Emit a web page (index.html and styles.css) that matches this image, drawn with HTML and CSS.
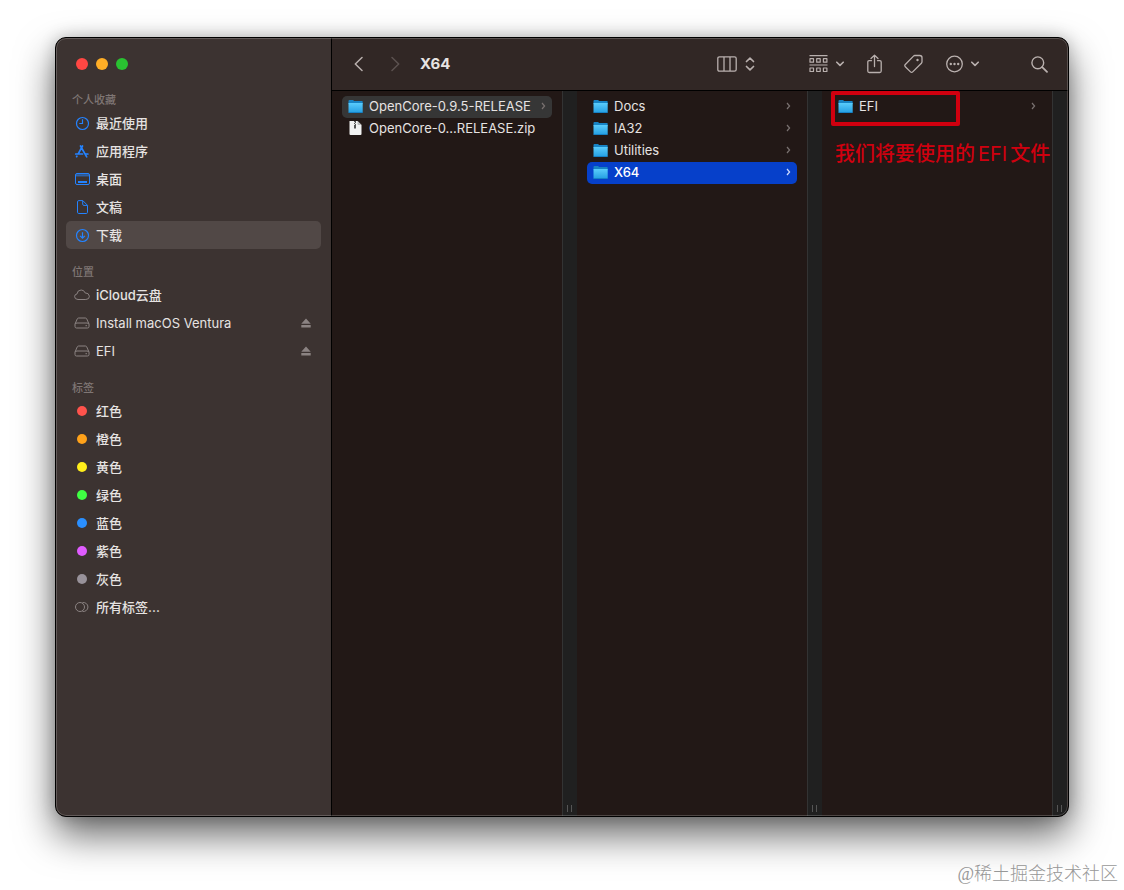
FILE: index.html
```html
<!DOCTYPE html>
<html lang="zh-CN">
<head>
<meta charset="utf-8">
<title>X64</title>
<link rel="stylesheet" href="styles.css">
</head>
<body>
<svg class="defs" aria-hidden="true">
  <defs>
    <linearGradient id="folder-front" x1="0" y1="0" x2="0" y2="1">
      <stop offset="0" stop-color="#5accfb"/>
      <stop offset="1" stop-color="#239ee2"/>
    </linearGradient>
    <symbol id="folder" viewBox="0 0 15 14">
      <path d="M.5 2Q.5 1 1.500 1H5l1.200 1H14q.7 0 .7.800V5H.5z" fill="#1783c4"/>
      <path d="M.5 4h14.200v9q0 .9-.9.9H1.400q-.9 0-.9-.9z" fill="url(#folder-front)"/>
      <path d="M.5 13h14.200v.7H.5z" fill="#1279bd"/>
    </symbol>
    <symbol id="drive" viewBox="0 0 16 14">
      <path d="M1 8 3.300 2.800Q3.700 2 4.600 2h6.800q.9 0 1.300.8L15 8v2.500q0 1.500-1.500 1.500h-11Q1 12 1 10.500zM1.200 8Q1.600 7 3 7h10q1.400 0 1.800 1M11.500 9.700h1.500" fill="none" stroke="currentColor"/>
    </symbol>
    <symbol id="eject" viewBox="0 0 10 10">
      <path d="M5 .5 9.700 5.700H.3zM.3 7h9.400v2.500H.3z" fill="currentColor"/>
    </symbol>
    <symbol id="next" viewBox="0 0 5 8">
      <path d="m1 1 2.600 3L1 7" fill="none" stroke="currentColor" stroke-width="1.200"/>
    </symbol>
    <symbol id="down" viewBox="0 0 8 6">
      <path d="m.8 1.200 3.200 3.200 3.200-3.200" fill="none" stroke="currentColor" stroke-width="1.600" stroke-linecap="round" stroke-linejoin="round"/>
    </symbol>
  </defs>
</svg>

<main class="window">
  <nav class="sidebar">
    <div class="lights">
      <button class="light close" aria-label="关闭"></button>
      <button class="light minimize" aria-label="最小化"></button>
      <button class="light maximize" aria-label="缩放"></button>
    </div>

    <section class="group favorites">
      <h2>个人收藏</h2>
      <a class="item" href="#recents"><svg viewBox="0 0 16 16"><g fill="none" stroke="currentColor" stroke-width="1.200"><circle cx="8.500" cy="8.500" r="6"/><path d="M8.500 4.300V8.500H5.300"/></g></svg>最近使用</a>
      <a class="item" href="#apps"><svg viewBox="0 0 16 16"><g fill="none" stroke="currentColor" stroke-width="1.700" stroke-linecap="round"><path d="M8.500 3 4.200 10.800M6.500 3l6.200 10.800M1.700 11h6.800M11.700 11h2.200M2.900 13.200l-.3.500"/></g></svg>应用程序</a>
      <a class="item" href="#desktop"><svg viewBox="0 0 16 16"><rect x="1.500" y="2.500" width="14" height="11" rx="1.500" fill="none" stroke="currentColor"/><path d="M2 3h13v2H2z" fill="currentColor" opacity=".45"/><path d="M2 4.700h13v.6H2zM4 10h9v2H4z" fill="currentColor"/></svg>桌面</a>
      <a class="item" href="#documents"><svg viewBox="0 0 16 16"><path d="M4.800 1.600h4l4.700 4.700v7q0 1.200-1.200 1.200H4.800q-1.300 0-1.300-1.300V2.900q0-1.300 1.300-1.300zM8.700 1.800v3.400q0 1.200 1.200 1.200h3.400" fill="none" stroke="currentColor"/></svg>文稿</a>
      <a class="item current" href="#downloads" aria-current="page"><svg viewBox="0 0 16 16"><g fill="none" stroke="currentColor" stroke-width="1.200"><circle cx="8.500" cy="8.500" r="6"/><path d="M8.500 5.200v6M6.100 8.800l2.400 2.400 2.400-2.400"/></g></svg>下载</a>
    </section>

    <section class="group places">
      <h2>位置</h2>
      <a class="item" href="#icloud"><svg viewBox="0 0 16 14"><path d="M4 11.500Q.6 11.300.6 8.600.6 6.300 3 5.900 3.500 2 7.200 2q2.900 0 3.900 2.900 3.900 0 4.300 3.300.1 3.200-3.600 3.300z" fill="none" stroke="currentColor"/></svg>iCloud云盘</a>
      <a class="item" href="#install"><svg><use href="#drive"/></svg><span class="name">Install macOS Ventura</span><svg class="eject"><use href="#eject"/></svg></a>
      <a class="item" href="#efi"><svg><use href="#drive"/></svg><span class="name">EFI</span><svg class="eject"><use href="#eject"/></svg></a>
    </section>

    <section class="group tags">
      <h2>标签</h2>
      <a class="item" href="#red"><i class="dot red"></i>红色</a>
      <a class="item" href="#orange"><i class="dot orange"></i>橙色</a>
      <a class="item" href="#yellow"><i class="dot yellow"></i>黄色</a>
      <a class="item" href="#green"><i class="dot green"></i>绿色</a>
      <a class="item" href="#blue"><i class="dot blue"></i>蓝色</a>
      <a class="item" href="#purple"><i class="dot purple"></i>紫色</a>
      <a class="item" href="#gray"><i class="dot gray"></i>灰色</a>
      <a class="item" href="#all"><svg viewBox="0 0 16 16"><g fill="none" stroke="currentColor"><circle cx="6" cy="8" r="4.500"/><path d="M8.500 3.600a4.500 4.500 0 1 1 0 8.800"/></g></svg>所有标签...</a>
    </section>
  </nav>

  <div class="content">
    <header class="toolbar">
      <button class="tool back" aria-label="返回"><svg width="9" height="16" viewBox="0 0 9 16"><path d="M8 1.500 1.300 8 8 14.500" fill="none" stroke="currentColor" stroke-width="1.500" stroke-linecap="round" stroke-linejoin="round"/></svg></button>
      <button class="tool forward" aria-label="前进" disabled><svg width="9" height="16" viewBox="0 0 9 16"><path d="M1 1.500 7.700 8 1 14.500" fill="none" stroke="currentColor" stroke-width="1.500" stroke-linecap="round" stroke-linejoin="round"/></svg></button>
      <h1>X64</h1>
      <button class="tool view" aria-label="分栏显示">
        <svg width="20" height="16" viewBox="0 0 20 16"><path d="M2.500.8h15q1.700 0 1.700 1.700v11q0 1.700-1.700 1.700h-15Q.8 15.200.8 13.500v-11Q.8.8 2.500.8zM7 1v14M13 1v14" fill="none" stroke="currentColor" stroke-width="1.300"/></svg>
        <svg width="10" height="14" viewBox="0 0 10 14"><path d="M1.500 4.500 5 1.200l3.500 3.300M1.500 9.500 5 12.800l3.500-3.300" fill="none" stroke="currentColor" stroke-width="1.700" stroke-linecap="round" stroke-linejoin="round"/></svg>
      </button>
      <button class="tool arrange" aria-label="分组">
        <svg width="19" height="18" viewBox="0 0 19 18"><path d="M.5.7h18M.5 10h18M1 3.700h3.500v3.500H1zM7.700 3.700h3.500v3.500H7.700zM14.400 3.700h3.500v3.500h-3.500zM1 13h3.500v3.500H1zM7.700 13h3.500v3.500H7.700zM14.400 13h3.500v3.500h-3.500z" fill="none" stroke="currentColor" stroke-width="1.200" stroke-linejoin="round"/></svg>
        <svg width="8" height="6"><use href="#down"/></svg>
      </button>
      <button class="tool share" aria-label="共享"><svg width="15" height="20" viewBox="0 0 15 20"><path d="M4.500 6.700H2.200Q.8 6.700.8 8.100V17q0 1.500 1.500 1.500h10.400q1.500 0 1.500-1.500V8.100q0-1.400-1.400-1.400h-2.300M7.500 12.500V1.200M4 4.500l3.500-3.400L11 4.500" fill="none" stroke="currentColor" stroke-width="1.300" stroke-linecap="round" stroke-linejoin="round"/></svg></button>
      <button class="tool tag" aria-label="标签"><svg width="19" height="20" viewBox="0 0 19 20"><path d="M10.800 1.500h5q2.200 0 2.200 2.200v4.100q0 .9-.6 1.500l-8.700 8.600q-1.100 1.100-2.200 0L1.300 12.700q-1.100-1.100 0-2.200L9.500 2.100q.6-.6 1.300-.6z" fill="none" stroke="currentColor" stroke-width="1.300"/><circle cx="13.500" cy="6" r="1.200" fill="currentColor"/></svg></button>
      <button class="tool more" aria-label="操作">
        <svg width="17" height="18" viewBox="0 0 17 18"><circle cx="8.500" cy="9" r="7.800" fill="none" stroke="currentColor" stroke-width="1.300"/><g fill="currentColor"><circle cx="4.800" cy="9" r="1.200"/><circle cx="8.500" cy="9" r="1.200"/><circle cx="12.200" cy="9" r="1.200"/></g></svg>
        <svg width="8" height="6"><use href="#down"/></svg>
      </button>
      <button class="tool search" aria-label="搜索"><svg width="17" height="17" viewBox="0 0 17 17"><path d="m11.200 11.200 4.800 4.600" stroke="currentColor" stroke-width="1.800" stroke-linecap="round"/><circle cx="6.800" cy="6.800" r="5.900" fill="none" stroke="currentColor" stroke-width="1.400"/></svg></button>
    </header>

    <div class="columns">
      <section class="column">
        <div class="files">
          <a class="file open" href="#opencore"><svg class="icon"><use href="#folder"/></svg><span class="name">OpenCore-0.9.5-RELEASE</span><svg class="next"><use href="#next"/></svg></a>
          <a class="file" href="#zip"><svg class="icon" viewBox="0 0 15 14"><path d="M1.500 0h8l4 4v9q0 1-1 1h-10q-1 0-1-1z" fill="#f2f2f2"/><path d="M9.500 0v3q0 1 1 1h3z" fill="#bbb"/><path d="M6 0h2v7.500H6z" fill="#555"/><path d="M6 1h1v1H6zM7 2h1v1H7zM6 3h1v1H6z" fill="#ddd"/></svg><span class="name">OpenCore-0...RELEASE.zip</span></a>
        </div>
        <div class="track"><span class="grip"></span></div>
      </section>
      <section class="column">
        <div class="files">
          <a class="file" href="#docs"><svg class="icon"><use href="#folder"/></svg><span class="name">Docs</span><svg class="next"><use href="#next"/></svg></a>
          <a class="file" href="#ia32"><svg class="icon"><use href="#folder"/></svg><span class="name">IA32</span><svg class="next"><use href="#next"/></svg></a>
          <a class="file" href="#utilities"><svg class="icon"><use href="#folder"/></svg><span class="name">Utilities</span><svg class="next"><use href="#next"/></svg></a>
          <a class="file selected" href="#x64"><svg class="icon"><use href="#folder"/></svg><span class="name">X64</span><svg class="next"><use href="#next"/></svg></a>
        </div>
        <div class="track"><span class="grip"></span></div>
      </section>
      <section class="column">
        <div class="files">
          <a class="file" href="#efi-folder"><svg class="icon"><use href="#folder"/></svg><span class="name">EFI</span><svg class="next"><use href="#next"/></svg></a>
        </div>
        <div class="track"><span class="grip"></span></div>
        <div class="callout"></div>
        <p class="note">我们将要使用的<span class="latin">EFI</span>文件</p>
      </section>
    </div>
  </div>
</main>
<footer class="watermark">@稀土掘金技术社区</footer>
</body>
</html>
```
FILE: styles.css
```css
* {
  box-sizing: border-box;
}

body {
  display: flex;
  flex-direction: column;
  min-height: 100vh;
  margin: 0;
  padding: 37px 0 0;
  background: #fff;
  font: 500 13px/22px Inter, "Noto Sans CJK SC", sans-serif;
  color: #e6e3e2;
}

h1,
h2,
p {
  margin: 0;
}

a {
  color: inherit;
  text-decoration: none;
}

button {
  padding: 0;
  border: 0;
  background: none;
  color: inherit;
}

svg {
  display: block;
  flex: none;
}

.defs {
  position: absolute;
  width: 0;
  height: 0;
}

.window {
  position: relative;
  display: flex;
  flex: 1;
  margin: 0 55px;
  border: 1px solid #000;
  border-radius: 11px;
  background: #221816;
  overflow: hidden;
  box-shadow: 0 18px 38px rgba(0, 0, 0, .6), 0 0 16px rgba(0, 0, 0, .2);
}

.window::after {
  content: "";
  position: absolute;
  inset: 0;
  border: 1px solid rgba(255, 255, 255, .2);
  border-radius: 10px;
  pointer-events: none;
}

.sidebar {
  flex: none;
  width: 276px;
  padding: 0 10px;
  border-right: 1px solid #000;
  background: #3c3331;
}

.lights {
  display: flex;
  gap: 8px;
  padding: 20px 10px 21px;
}

.light {
  width: 12px;
  height: 12px;
  border-radius: 50%;
}

.close { background: #ff4743; }
.minimize { background: #ffae26; }
.maximize { background: #29c231; }

.group {
  margin-bottom: 14px;
}

.group h2 {
  padding-left: 6px;
  font-size: 11px;
  font-weight: 500;
  line-height: 18px;
  color: #7f7674;
}

.item {
  display: flex;
  align-items: center;
  height: 28px;
  padding: 0 10px 0 8px;
  border-radius: 5px;
}

.item svg {
  width: 16px;
  height: 16px;
  margin-right: 6px;
  color: #8b8382;
}

.favorites .item svg {
  color: #2483ff;
}

.item .eject {
  width: 10px;
  height: 10px;
  margin: 0 0 0 auto;
}

.name {
  font-weight: 400;
}

.current {
  background: #514846;
}

.dot {
  width: 10px;
  height: 10px;
  margin: 0 9px 0 3px;
  border-radius: 50%;
}

.red { background: #ff534c; }
.orange { background: #ffa21a; }
.yellow { background: #ffee1b; }
.green { background: #3fff43; }
.blue { background: #2a8fff; }
.purple { background: #e05cff; }
.gray { background: #98929a; }

.content {
  display: flex;
  flex: 1;
  flex-direction: column;
  min-width: 0;
}

.toolbar {
  display: flex;
  align-items: center;
  height: 53px;
  padding: 0 20px 0 22px;
  border-bottom: 1px solid #000;
  background: #312725;
}

.toolbar h1 {
  margin: 0 auto 0 20px;
  font-size: 15px;
  font-weight: 700;
}

.tool {
  display: flex;
  align-items: center;
  gap: 8px;
  color: #b9b0ae;
}

.forward {
  margin-left: 28px;
  color: #5c5250;
}

.arrange {
  margin-left: 54px;
}

.share,
.tag,
.more {
  margin-left: 23px;
}

.tag {
  margin-left: 22px;
}

.search {
  margin-left: 52px;
}

.columns {
  display: flex;
  flex: 1;
  padding-right: 1px;
}

.column {
  position: relative;
  display: flex;
  flex: 1;
}

.files {
  flex: 1;
  min-width: 0;
  padding: 5px 10px;
}

.file {
  display: flex;
  align-items: center;
  height: 22px;
  padding: 0 6px 2px;
  border-radius: 5px;
  white-space: nowrap;
}

.file .icon {
  width: 15px;
  height: 14px;
  margin-right: 6px;
}

.file .next {
  width: 5px;
  height: 8px;
  margin-left: auto;
  color: #797170;
}

.open {
  background: #363636;
}

.selected {
  background: #0640ca;
  color: #fff;
}

.selected .name {
  font-weight: 500;
}

.selected .next {
  color: #cfdcff;
}

.track {
  display: flex;
  align-items: flex-end;
  justify-content: center;
  width: 15px;
  padding: 0 1px 4px 0;
  border-left: 1px solid #333;
  background: #202020;
}

.grip {
  width: 5px;
  height: 7px;
  border: solid #555;
  border-width: 0 1px;
}

.callout {
  position: absolute;
  top: 0;
  left: 9px;
  width: 129px;
  height: 35px;
  border: 4px solid #d0000f;
  border-radius: 2px;
}

.note {
  position: absolute;
  top: 48px;
  left: 13px;
  font-size: 20px;
  font-weight: 500;
  line-height: 30px;
  white-space: nowrap;
  color: #d0000f;
}

.latin {
  margin: 0 3px;
  font-weight: 400;
}

.watermark {
  height: 73px;
  padding: 44px 6px 0 0;
  font: 300 18px/26px "Liberation Serif", "Noto Sans CJK SC", serif;
  text-align: right;
  color: #999;
}
```
